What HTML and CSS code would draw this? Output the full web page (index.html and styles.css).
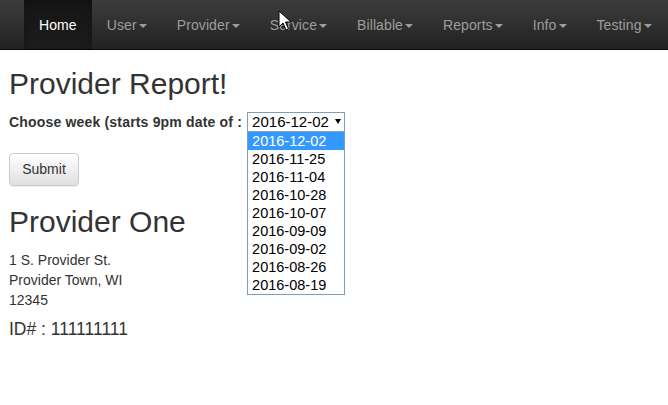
FILE: index.html
```html
<!DOCTYPE html>
<html>
<head>
<meta charset="utf-8">
<link rel="stylesheet" href="styles.css">
</head>
<body>
<nav class="navbar">
  <ul class="nav">
    <li class="active"><a>Home</a></li>
    <li><a>User<span class="caret"></span></a></li>
    <li><a>Provider<span class="caret"></span></a></li>
    <li><a>Service<span class="caret"></span></a></li>
    <li><a>Billable<span class="caret"></span></a></li>
    <li><a>Reports<span class="caret"></span></a></li>
    <li><a>Info<span class="caret"></span></a></li>
    <li><a>Testing<span class="caret"></span></a></li>
  </ul>
</nav>
<main class="content">
  <h2 class="title">Provider Report!</h2>
  <div class="week-row">
    <span class="week-label">Choose week (starts 9pm date of :</span>
    <div class="select">
      <span class="select-value">2016-12-02</span>
      <span class="select-arrow"></span>
      <ul class="select-list">
        <li class="selected">2016-12-02</li>
        <li>2016-11-25</li>
        <li>2016-11-04</li>
        <li>2016-10-28</li>
        <li>2016-10-07</li>
        <li>2016-09-09</li>
        <li>2016-09-02</li>
        <li>2016-08-26</li>
        <li>2016-08-19</li>
      </ul>
    </div>
  </div>
  <button class="btn">Submit</button>
  <h2 class="provider">Provider One</h2>
  <div class="address">
    <div>1 S. Provider St.</div>
    <div>Provider Town, WI</div>
    <div>12345</div>
  </div>
  <h4 class="ident">ID# : 111111111</h4>
</main>
<svg class="cursor" width="14" height="22" viewBox="0 0 14 22">
  <path d="M1 1 L1 17 L5 13 L8 20 L10.5 19 L7.5 12 L13 12 Z" fill="#fff" stroke="#000" stroke-width="1" stroke-linejoin="round"/>
</svg>
</body>
</html>
```
FILE: styles.css
```css
html, body {
  margin: 0;
  padding: 0;
  background: #fff;
  font-family: "Liberation Sans", Arial, sans-serif;
  font-size: 14px;
  line-height: 20px;
  color: #333;
}
.navbar {
  height: 49px;
  background: linear-gradient(to bottom, #3c3c3c 0%, #222 100%);
  border-bottom: 1px solid #080808;
}
.nav {
  list-style: none;
  margin: 0;
  padding: 0 0 0 24px;
  display: flex;
}
.nav li a {
  display: block;
  padding: 15px 15px 14px;
  line-height: 20px;
  color: #9d9d9d;
  letter-spacing: 0.1px;
}
.nav li.active a {
  color: #fff;
  background: linear-gradient(to bottom, #151515 0%, #1c1c1c 100%);
  box-shadow: inset 0 3px 9px rgba(0,0,0,0.2);
}
.caret {
  display: inline-block;
  width: 0;
  height: 0;
  margin-left: 2px;
  vertical-align: middle;
  border-top: 4px solid;
  border-left: 4px solid transparent;
  border-right: 4px solid transparent;
}
.content {
  padding: 0 9px;
}
h2 {
  font-size: 30px;
  font-weight: 500;
  line-height: 33px;
  margin: 0;
}
.title {
  margin-top: 17px;
  margin-bottom: 11px;
}
.week-row {
  display: flex;
  align-items: center;
  height: 21px;
}
.week-label {
  font-weight: bold;
  margin-right: 5px;
  letter-spacing: 0.18px;
}
.select {
  position: relative;
  box-sizing: border-box;
  width: 98px;
  height: 20px;
  border: 1px solid #7f9db9;
  display: flex;
  align-items: center;
  padding-left: 4px;
  font-size: 15px;
  color: #000;
  background: #fff;
}
.select-value {
  line-height: 18px;
}
.select-arrow {
  margin-left: 6px;
  width: 0;
  height: 0;
  border-top: 5px solid #000;
  border-left: 3px solid transparent;
  border-right: 3px solid transparent;
}
.select-list {
  position: absolute;
  left: -1px;
  top: 18px;
  width: 98px;
  box-sizing: border-box;
  margin: 0;
  padding: 0;
  list-style: none;
  border: 1px solid #7f9db9;
  background: #fff;
  font-size: 14.5px;
  line-height: 18px;
  color: #000;
  z-index: 2;
}
.select-list li {
  padding-left: 4px;
  height: 18px;
}
.select-list li.selected {
  background: #3399ff;
  color: #fff;
}
.btn {
  display: block;
  margin-top: 21px;
  box-sizing: border-box;
  height: 33px;
  padding: 6px 12px;
  font-family: "Liberation Sans", Arial, sans-serif;
  font-size: 14px;
  line-height: 19px;
  color: #333;
  background: linear-gradient(to bottom, #fff 0%, #e0e0e0 100%);
  border: 1px solid #ccc;
  border-radius: 4px;
  box-shadow: inset 0 1px 0 rgba(255,255,255,0.15), 0 1px 1px rgba(0,0,0,0.075);
  width: 70px;
}
.provider {
  margin-top: 19px;
  margin-bottom: 12px;
}
.address {
  line-height: 20px;
}
.ident {
  margin: 10px 0 0;
  font-size: 17.5px;
  font-weight: 500;
  line-height: 18px;
}
.cursor {
  position: absolute;
  left: 278px;
  top: 10px;
}
```
